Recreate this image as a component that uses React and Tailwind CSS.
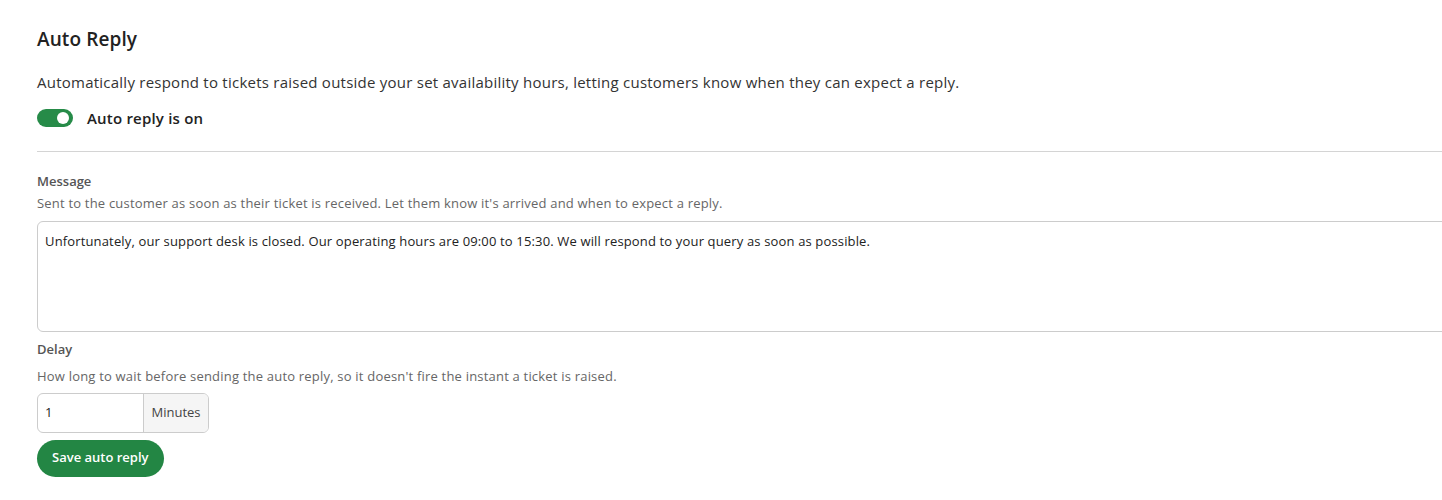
export default function App() {
  return (
    <div className="bg-white min-h-[500px] pl-[37px] pt-[28px] overflow-hidden" style={{ fontFamily: '"Open Sans", sans-serif' }}>
      <div className="w-[1440px]">
        <h2 className="text-[19px] leading-[22px] font-semibold text-[#222] tracking-[0.1px]">Auto Reply</h2>
        <p className="mt-[21px] text-[15px] leading-[22px] text-[#333] tracking-[0.24px]">
          Automatically respond to tickets raised outside your set availability hours, letting customers know when they can expect a reply.
        </p>
        <div className="mt-[14px] flex items-center gap-[14px]">
          <button className="relative w-[36px] h-[18px] rounded-full bg-[#268b48]">
            <span className="absolute right-[4px] top-[3px] w-[12px] h-[12px] rounded-full bg-white" />
          </button>
          <span className="text-[15px] font-semibold text-[#222] tracking-[0.2px]">Auto reply is on</span>
        </div>
        <div className="mt-[21px] border-t border-[#d4d4d4]" />
        <div className="mt-[21px] text-[13px] leading-[16px] font-semibold text-[#555]">Message</div>
        <div className="mt-[6px] text-[13px] leading-[16px] text-[#666] tracking-[0.2px]">
          Sent to the customer as soon as their ticket is received. Let them know it's arrived and when to expect a reply.
        </div>
        <textarea
          className="mt-[10px] block w-full h-[111px] border border-[#ccc] rounded-[6px] px-[7px] py-[10px] text-[13px] leading-[18px] text-[#222] tracking-[0.15px] resize-none outline-none"
          defaultValue="Unfortunately, our support desk is closed. Our operating hours are 09:00 to 15:30. We will respond to your query as soon as possible."
        />
        <div className="mt-[9px] text-[13px] leading-[16px] font-semibold text-[#555]">Delay</div>
        <div className="mt-[11px] text-[13px] leading-[16px] text-[#666] tracking-[0.2px]">
          How long to wait before sending the auto reply, so it doesn't fire the instant a ticket is raised.
        </div>
        <div className="mt-[9px] flex w-[172px] h-[40px] border border-[#ccc] rounded-[6px] overflow-hidden">
          <input className="w-[105px] px-[7px] text-[13px] text-[#222] outline-none" defaultValue="1" />
          <span className="flex-1 flex items-center justify-center border-l border-[#ccc] bg-[#f5f5f5] text-[13px] text-[#444]">Minutes</span>
        </div>
        <button className="mt-[7px] h-[37px] px-[15px] rounded-full bg-[#238644] text-white text-[13px] font-semibold">
          Save auto reply
        </button>
      </div>
    </div>
  );
}
